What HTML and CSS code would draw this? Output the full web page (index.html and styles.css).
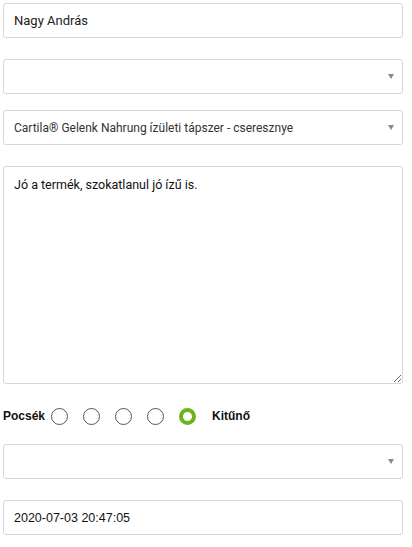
FILE: index.html
```html
<!DOCTYPE html>
<html lang="hu">
<head>
<meta charset="utf-8">
<link rel="stylesheet" href="styles.css">
</head>
<body>
<form class="form">
  <div class="field f-name">Nagy András</div>
  <div class="field select f-gap21"><span class="val"></span><span class="arrow"></span></div>
  <div class="field select f-gap16"><span class="val">Cartila® Gelenk Nahrung ízületi tápszer - cseresznye</span><span class="arrow"></span></div>
  <textarea class="area">Jó a termék, szokatlanul jó ízű is.</textarea>
  <div class="rating">
    <span class="lbl">Pocsék</span>
    <span class="radio first"></span>
    <span class="radio"></span>
    <span class="radio"></span>
    <span class="radio"></span>
    <span class="radio on"></span>
    <span class="lbl lbl-end">Kitűnő</span>
  </div>
  <div class="field select"><span class="val"></span><span class="arrow"></span></div>
  <div class="field f-gap21 f-date">2020-07-03 20:47:05</div>
</form>
</body>
</html>
```
FILE: styles.css
```css
html, body {
  margin: 0;
  padding: 0;
  background: #fff;
}
.form {
  padding: 3px 0 0 3px;
  width: 400px;
  display: flex;
  flex-direction: column;
  font-family: Roboto, "Liberation Sans", sans-serif;
}
.field {
  box-sizing: border-box;
  height: 35px;
  border: 1px solid #d6d6d6;
  border-radius: 3px;
  padding: 0 10px;
  display: flex;
  align-items: center;
  font-size: 13px;
  color: #222;
}
.f-gap21 { margin-top: 21px; }
.f-gap16 { margin-top: 16px; }
.f-date {
  font-family: "Liberation Sans", Arial, sans-serif;
  font-size: 12.5px;
  color: #111;
}
.select {
  justify-content: space-between;
  padding-right: 8px;
  color: #333;
  font-size: 12px;
}
.arrow {
  width: 0;
  height: 0;
  border-left: 3.5px solid transparent;
  border-right: 3.5px solid transparent;
  border-top: 5px solid #8a8a8a;
}
.area {
  margin: 21px 0 0 0;
  box-sizing: border-box;
  height: 218px;
  width: 400px;
  border: 1px solid #d6d6d6;
  border-radius: 3px;
  padding: 10px 10px;
  font-family: Roboto, "Liberation Sans", sans-serif;
  font-size: 12.5px;
  color: #111;
  outline: none;
}
.rating {
  display: flex;
  align-items: center;
  height: 18px;
  margin: 23px 0 19px 0;
}
.lbl {
  font-family: "Liberation Sans", Arial, sans-serif;
  font-weight: bold;
  font-size: 12px;
  color: #111;
}
.radio {
  box-sizing: border-box;
  width: 17px;
  height: 17px;
  border: 1px solid #555;
  border-radius: 50%;
  margin-left: 15px;
}
.radio.first { margin-left: 6px; }
.radio.on {
  border: 4px solid #6cb320;
}
.lbl-end { margin-left: 16px; }
```
